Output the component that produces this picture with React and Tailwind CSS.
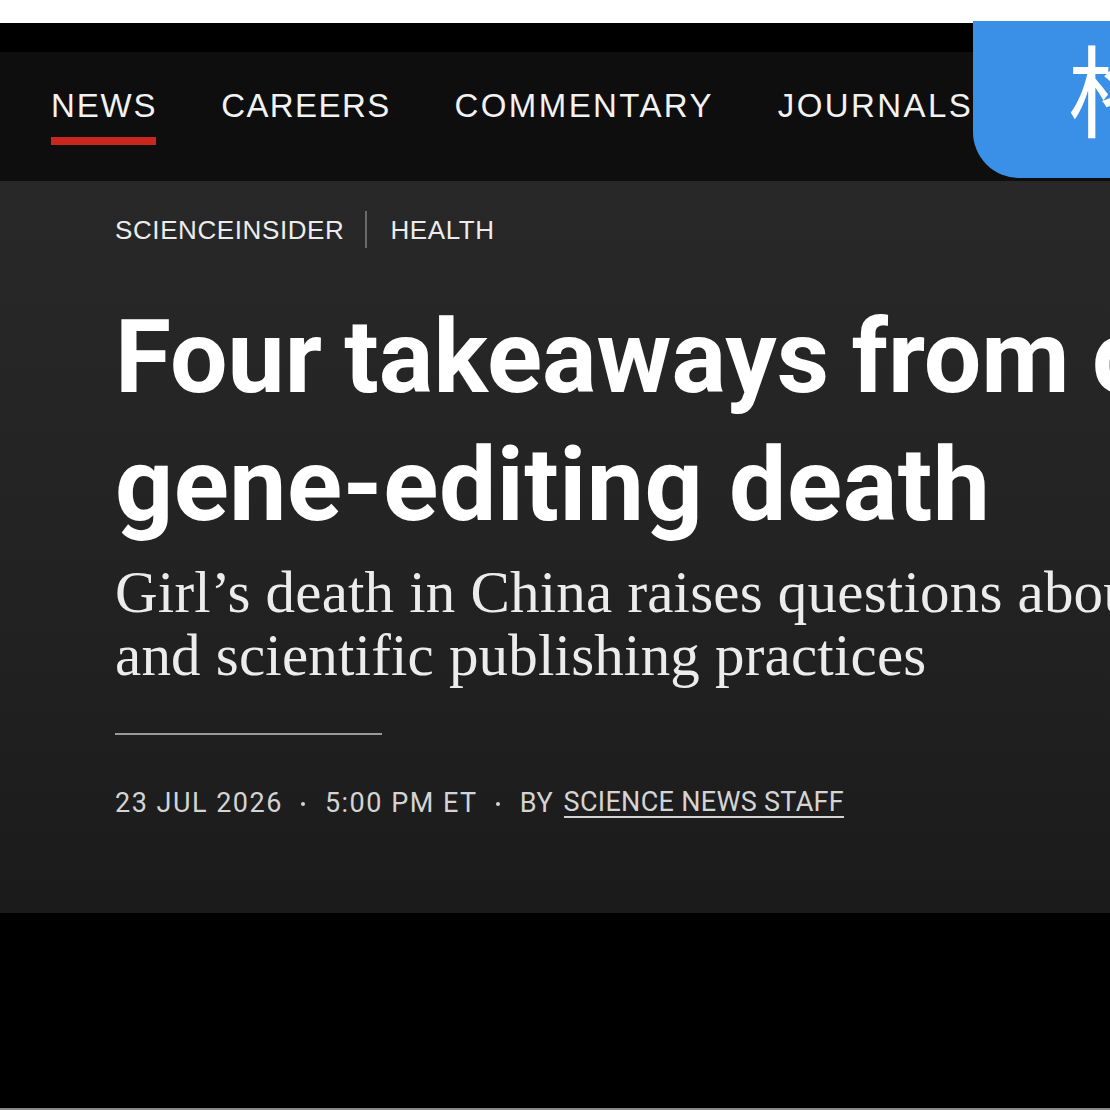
import React from "react";

// label + letter spacing per nav item
const navItems = [
	{ label: "NEWS", track: "tracking-[1.8px]" },
	{ label: "CAREERS", track: "tracking-[1.4px]" },
	{ label: "COMMENTARY", track: "tracking-[2.4px]" },
	{ label: "JOURNALS", track: "tracking-[2.4px]" },
];

export default function App() {
	return (
		<div className="relative w-full h-[1110px] overflow-hidden bg-black">
			{/* Status strip above the site */}
			<div className="h-[23px] bg-white"></div>
			<div className="h-[29px] bg-black"></div>

			{/* Section navigation */}
			<nav className="h-[129px] bg-[#0e0e0e] pl-[51px] pt-[37px] flex gap-[64px] font-['Liberation_Sans',Arial,sans-serif]">
				{navItems.map((item, i) => (
					<div key={item.label} className="flex flex-col items-start">
						<span className={`text-[33px] leading-[33px] text-[#f2f2f2] whitespace-nowrap ${item.track}`}>
							{item.label}
						</span>
						{i === 0 && <div className="mt-[15px] h-[8px] w-[105px] bg-[#c9261d]"></div>}
					</div>
				))}
			</nav>

			{/* Article header */}
			<header className="h-[732px] bg-gradient-to-b from-[#282828] via-[#232323] to-[#1b1b1b] pl-[115px] pt-[30px]">
				<div className="flex items-center font-['Liberation_Sans',Arial,sans-serif] text-[26px] leading-[26px] text-[#ececec]">
					<span className="tracking-[0.6px]">SCIENCEINSIDER</span>
					<span className="ml-[21px] mr-[23px] w-[2px] h-[37px] bg-[#6a6a6a]"></span>
					<span className="tracking-[0.6px]">HEALTH</span>
				</div>

				<h1 className="mt-[45px] font-['Roboto',sans-serif] font-bold text-[102px] leading-[128px] text-white whitespace-nowrap">
					<span className="block tracking-[0px] [word-spacing:-3px]">Four takeaways from controversial</span>
					<span className="block tracking-[0.5px]">gene-editing death</span>
				</h1>

				<p className="mt-[12px] font-['Liberation_Serif','Times_New_Roman',serif] text-[59px] leading-[63px] tracking-[0.2px] text-[#ececec] whitespace-nowrap">
					<span className="block">Girl’s death in China raises questions about trial oversight</span>
					<span className="block">and scientific publishing practices</span>
				</p>

				<div className="mt-[46px] w-[267px] h-[2px] bg-[#9a9a9a]"></div>

				<div className="mt-[54px] flex items-center font-['Roboto',sans-serif] text-[27px] leading-[27px] text-[#d4d4d4] whitespace-nowrap">
					<span className="tracking-[1.5px]">23 JUL 2026</span>
					<span className="ml-[18px] mr-[20px] w-[4px] h-[4px] rounded-full bg-[#d4d4d4]"></span>
					<span className="tracking-[1.5px]">5:00 PM ET</span>
					<span className="ml-[18px] mr-[20px] w-[4px] h-[4px] rounded-full bg-[#d4d4d4]"></span>
					<span className="tracking-[0.8px]">BY</span>
					<span className="ml-[10px] tracking-[0.3px] border-b-2 border-[#d4d4d4]">SCIENCE NEWS STAFF</span>
				</div>
			</header>

			{/* Empty page body below header */}
			<div className="h-[195px] bg-black"></div>
			<div className="h-[2px] bg-[#888888]"></div>

			{/* Floating translate button */}
			<div className="absolute left-[973px] top-[21px] w-[160px] h-[157px] bg-[#3a8fe6] rounded-bl-[46px] overflow-hidden">
				<span className="absolute left-[95px] top-[16px] text-[100px] leading-[100px] text-white font-['Noto_Sans_CJK_SC',sans-serif]">
					格
				</span>
			</div>
		</div>
	);
}
